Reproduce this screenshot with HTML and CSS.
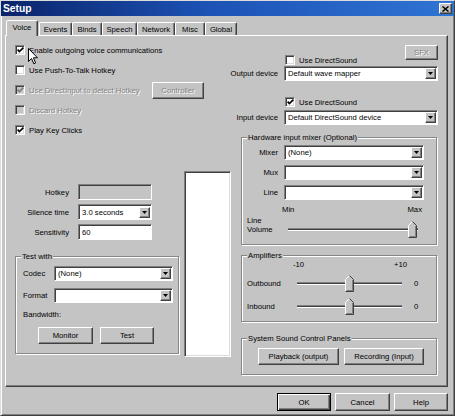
FILE: index.html
```html
<!DOCTYPE html>
<html lang="en">
  <head>
    <meta charset="utf-8">
    <title>Setup</title>
    <link rel="stylesheet" href="styles.css">
  </head>
  <body>
    <div class="window">

      <div class="titlebar">
        <span class="title">Setup</span>
        <span class="close">
          <svg width="7" height="6" viewBox="0 0 7 6"><path d="M0.5 0.5 L6.5 5.5 M6.5 0.5 L0.5 5.5" stroke="#000" stroke-width="1.5"/></svg>
        </span>
      </div>

      <div class="tabs">
        <div class="tab active w-voice">Voice</div>
        <div class="tab w-events">Events</div>
        <div class="tab w-binds">Binds</div>
        <div class="tab w-speech">Speech</div>
        <div class="tab w-network">Network</div>
        <div class="tab w-misc">Misc</div>
        <div class="tab w-global">Global</div>
      </div>

      <div class="panel">
        <div class="col-left">
          <div class="checks">
            <div class="check-row">
              <span class="cb"><svg width="7" height="6" viewBox="0 0 7 6"><polyline points="0.6,2.6 2.4,4.6 6.4,0.6" fill="none" stroke="#000" stroke-width="1.6"/></svg></span>
              <span class="cb-label">Enable outgoing voice communications</span>
            </div>
            <div class="check-row">
              <span class="cb"></span>
              <span class="cb-label">Use Push-To-Talk Hotkey</span>
            </div>
            <div class="check-row wide">
              <span class="cb off"><svg width="7" height="6" viewBox="0 0 7 6"><polyline points="0.6,2.6 2.4,4.6 6.4,0.6" fill="none" stroke="#808080" stroke-width="1.6"/></svg></span>
              <span class="cb-label dim">Use DirectInput to detect Hotkey</span>
              <span class="btn dim w-controller">Controller</span>
            </div>
            <div class="check-row">
              <span class="cb off"></span>
              <span class="cb-label dim">Discard Hotkey</span>
            </div>
            <div class="check-row">
              <span class="cb"><svg width="7" height="6" viewBox="0 0 7 6"><polyline points="0.6,2.6 2.4,4.6 6.4,0.6" fill="none" stroke="#000" stroke-width="1.6"/></svg></span>
              <span class="cb-label">Play Key Clicks</span>
            </div>
          </div>

          <div class="lower">
            <div class="fields">
              <div class="field-row">
                <label>Hotkey</label>
                <span class="edit off"></span>
              </div>
              <div class="field-row">
                <label>Silence time</label>
                <span class="combo w-field"><span class="val">3.0 seconds</span><span class="drop"><svg width="5" height="3" viewBox="0 0 5 3"><polygon points="0,0 5,0 2.5,3" fill="#000"/></svg></span></span>
              </div>
              <div class="field-row">
                <label>Sensitivity</label>
                <span class="edit"><span class="val">60</span></span>
              </div>

              <div class="group test-group">
                <span class="legend">Test with</span>
                <div class="g-row">
                  <label class="g-label">Codec</label>
                  <span class="combo w-codec"><span class="val">(None)</span><span class="drop"><svg width="5" height="3" viewBox="0 0 5 3"><polygon points="0,0 5,0 2.5,3" fill="#000"/></svg></span></span>
                </div>
                <div class="g-row">
                  <label class="g-label">Format</label>
                  <span class="combo w-codec"><span class="val"></span><span class="drop"><svg width="5" height="3" viewBox="0 0 5 3"><polygon points="0,0 5,0 2.5,3" fill="#000"/></svg></span></span>
                </div>
                <div class="bandwidth">Bandwidth:</div>
                <div class="test-buttons">
                  <span class="btn w-monitor">Monitor</span>
                  <span class="btn w-test">Test</span>
                </div>
              </div>
            </div>
            <div class="listbox"></div>
          </div>
        </div>

        <div class="col-right">
          <div class="out-top">
            <div class="check-row small">
              <span class="cb"></span>
              <span class="cb-label">Use DirectSound</span>
            </div>
            <span class="btn dim w-sfx">SFX</span>
          </div>
          <div class="dev-row">
            <label>Output device</label>
            <span class="combo w-dev"><span class="val">Default wave mapper</span><span class="drop"><svg width="5" height="3" viewBox="0 0 5 3"><polygon points="0,0 5,0 2.5,3" fill="#000"/></svg></span></span>
          </div>
          <div class="check-row small in-check">
            <span class="cb"><svg width="7" height="6" viewBox="0 0 7 6"><polyline points="0.6,2.6 2.4,4.6 6.4,0.6" fill="none" stroke="#000" stroke-width="1.6"/></svg></span>
            <span class="cb-label">Use DirectSound</span>
          </div>
          <div class="dev-row in-row">
            <label>Input device</label>
            <span class="combo w-dev"><span class="val">Default DirectSound device</span><span class="drop"><svg width="5" height="3" viewBox="0 0 5 3"><polygon points="0,0 5,0 2.5,3" fill="#000"/></svg></span></span>
          </div>

          <div class="group mixer-group">
            <span class="legend">Hardware input mixer (Optional)</span>
            <div class="mix-row">
              <label>Mixer</label>
              <span class="combo w-mix"><span class="val">(None)</span><span class="drop"><svg width="5" height="3" viewBox="0 0 5 3"><polygon points="0,0 5,0 2.5,3" fill="#000"/></svg></span></span>
            </div>
            <div class="mix-row">
              <label>Mux</label>
              <span class="combo w-mix"><span class="val"></span><span class="drop"><svg width="5" height="3" viewBox="0 0 5 3"><polygon points="0,0 5,0 2.5,3" fill="#000"/></svg></span></span>
            </div>
            <div class="mix-row">
              <label>Line</label>
              <span class="combo w-mix"><span class="val"></span><span class="drop"><svg width="5" height="3" viewBox="0 0 5 3"><polygon points="0,0 5,0 2.5,3" fill="#000"/></svg></span></span>
            </div>
            <div class="minmax"><span>Min</span><span>Max</span></div>
            <div class="volume-row">
              <span class="vol-label">Line<br>Volume</span>
              <div class="slider w-vol">
                <span class="track"></span>
                <svg class="thumb" style="left: 120px" width="9" height="17" viewBox="0 0 9 17"><path d="M0.5 16.5 V4.5 L4.5 0.5 L8.5 4.5 V16.5 Z" fill="#c4c4c4"/><path d="M0.5 16.5 V4.5 L4.5 0.5" fill="none" stroke="#fff"/><path d="M4.5 0.5 L8.5 4.5 V16.5 H0.5" fill="none" stroke="#404040"/><path d="M7.5 5 V15.5 H1.5" fill="none" stroke="#808080"/></svg>
              </div>
            </div>
          </div>

          <div class="group amp-group">
            <span class="legend">Amplifiers</span>
            <div class="ticks"><span>-10</span><span>+10</span></div>
            <div class="amp-row">
              <span class="amp-label">Outbound</span>
              <div class="slider w-amp">
                <span class="track"></span>
                <svg class="thumb" style="left: 48px" width="9" height="17" viewBox="0 0 9 17"><path d="M0.5 16.5 V4.5 L4.5 0.5 L8.5 4.5 V16.5 Z" fill="#c4c4c4"/><path d="M0.5 16.5 V4.5 L4.5 0.5" fill="none" stroke="#fff"/><path d="M4.5 0.5 L8.5 4.5 V16.5 H0.5" fill="none" stroke="#404040"/><path d="M7.5 5 V15.5 H1.5" fill="none" stroke="#808080"/></svg>
              </div>
              <span class="amp-val">0</span>
            </div>
            <div class="amp-row">
              <span class="amp-label">Inbound</span>
              <div class="slider w-amp">
                <span class="track"></span>
                <svg class="thumb" style="left: 48px" width="9" height="17" viewBox="0 0 9 17"><path d="M0.5 16.5 V4.5 L4.5 0.5 L8.5 4.5 V16.5 Z" fill="#c4c4c4"/><path d="M0.5 16.5 V4.5 L4.5 0.5" fill="none" stroke="#fff"/><path d="M4.5 0.5 L8.5 4.5 V16.5 H0.5" fill="none" stroke="#404040"/><path d="M7.5 5 V15.5 H1.5" fill="none" stroke="#808080"/></svg>
              </div>
              <span class="amp-val">0</span>
            </div>
          </div>

          <div class="group sys-group">
            <span class="legend">System Sound Control Panels</span>
            <div class="sys-buttons">
              <span class="btn w-play">Playback (output)</span>
              <span class="btn w-rec">Recording (Input)</span>
            </div>
          </div>
        </div>
      </div>

      <div class="footer">
        <span class="btn default w-ok">OK</span>
        <span class="btn w-cancel">Cancel</span>
        <span class="btn w-help">Help</span>
      </div>

      <svg class="cursor" width="11" height="17" viewBox="0 0 11 17"><path d="M0.5 0.5 V13.5 L3.5 10.5 L5.8 15.8 L7.6 15 L5.4 9.8 H9.5 Z" fill="#fff" stroke="#000"/></svg>
    </div>
  </body>
</html>
```

FILE: styles.css
```css
* { box-sizing: border-box; }

body {
  margin: 0;
  background-color: #c4c4c4;
  font-family: 'Liberation Sans', Arial, sans-serif;
  font-size: 7.7px;
  line-height: 9px;
  color: #000;
}

.window {
  position: relative;
  width: 455px;
  height: 416px;
  border: 1px solid;
  border-color: #dcdcdc #404040 #404040 #dcdcdc;
  box-shadow: inset 1px 1px #fff, inset -1px -1px #808080;
  overflow: hidden;
}

/* title bar */

.titlebar {
  height: 15px;
  display: flex;
  align-items: center;
  justify-content: space-between;
  padding: 0 2px 0 2px;
  background: linear-gradient(90deg, #0a246a, #1c52b4 45%, #2f74d4);
}

.title {
  color: #fff;
  font-weight: bold;
  font-size: 10.3px;
}

.close {
  width: 13px;
  height: 11px;
  display: flex;
  align-items: center;
  justify-content: center;
  background-color: #c4c4c4;
  border: 1px solid;
  border-color: #fff #404040 #404040 #fff;
  box-shadow: inset -1px -1px #808080;
}

/* tabs */

.tabs {
  display: flex;
  align-items: flex-end;
  height: 15px;
  margin-top: 4px;
  padding-left: 5px;
}

.tab {
  height: 13px;
  display: flex;
  align-items: center;
  justify-content: center;
  border: 1px solid;
  border-bottom: none;
  border-color: #fff #404040 transparent #fff;
  border-radius: 2px 2px 0 0;
  box-shadow: inset -1px 0 #808080;
}

.tab.active {
  position: relative;
  z-index: 1;
  height: 16px;
  margin-bottom: -1px;
  background-color: #c4c4c4;
  padding-bottom: 2px;
}

.w-voice { width: 32px; }
.w-events { width: 33px; margin-left: 1px; }
.w-binds { width: 30px; }
.w-speech { width: 35px; }
.w-network { width: 38px; }
.w-misc { width: 30px; }
.w-global { width: 32px; }

/* panel */

.panel {
  display: grid;
  grid-template-columns: 235px 197px;
  width: 443px;
  height: 352px;
  margin-left: 4px;
  border: 1px solid;
  border-color: #fff #404040 #404040 #fff;
  box-shadow: inset -1px -1px #808080;
}

.checks {
  padding-top: 4px;
}

.check-row {
  display: flex;
  align-items: center;
  height: 20px;
  padding-left: 9px;
}

.check-row.wide {
  width: 198px;
}

.check-row.small {
  height: 10px;
  padding-left: 0;
}

.cb {
  width: 10px;
  height: 10px;
  flex-shrink: 0;
  display: flex;
  align-items: center;
  justify-content: center;
  background-color: #fff;
  border: 1px solid;
  border-color: #808080 #fff #fff #808080;
  box-shadow: inset 1px 1px #404040, inset -1px -1px #dcdcdc;
}

.cb.off {
  background-color: #c4c4c4;
}

.cb-label {
  margin-left: 4px;
  white-space: nowrap;
}

.dim {
  color: #848484;
  text-shadow: 1px 1px 0 #fff;
}

.btn {
  display: flex;
  align-items: center;
  justify-content: center;
  height: 17px;
  background-color: #c4c4c4;
  border: 1px solid;
  border-color: #fff #404040 #404040 #fff;
  box-shadow: inset -1px -1px #808080;
  white-space: nowrap;
}

.btn.default {
  border-color: #000;
  box-shadow: inset 1px 1px #fff, inset -1px -1px #404040, inset -2px -2px #808080;
}

.w-controller { width: 52px; margin-left: auto; }
.w-monitor { width: 55px; }
.w-test { width: 54px; margin-left: 7px; }
.w-sfx { width: 33px; height: 15px; margin-left: auto; }
.w-play { width: 81px; }
.w-rec { width: 80px; }
.w-ok { width: 54px; height: 18px; }
.w-cancel { width: 55px; height: 18px; }
.w-help { width: 54px; height: 18px; }

/* edit boxes and combos */

.edit,
.combo {
  display: flex;
  align-items: center;
  height: 15px;
  background-color: #fff;
  border: 1px solid;
  border-color: #808080 #fff #fff #808080;
  box-shadow: inset 1px 1px #404040;
}

.edit.off {
  background-color: #c4c4c4;
}

.val {
  flex: 1;
  padding-left: 3px;
  white-space: nowrap;
}

.drop {
  width: 11px;
  height: 11px;
  margin-right: 1px;
  display: flex;
  align-items: center;
  justify-content: center;
  background-color: #c4c4c4;
  border: 1px solid;
  border-color: #fff #404040 #404040 #fff;
  box-shadow: inset -1px -1px #808080;
}

/* left lower area */

.lower {
  display: flex;
  margin-top: 31px;
}

.fields {
  width: 174px;
  padding-top: 13px;
}

.field-row {
  display: flex;
  align-items: center;
  margin-bottom: 4px;
}

.field-row label {
  width: 63px;
  text-align: right;
  margin-right: 9px;
}

.field-row .edit,
.field-row .combo {
  width: 74px;
  height: 16px;
}

.group {
  position: relative;
  border: 1px solid #868686;
  box-shadow: 1px 1px 0 #fff, inset 1px 1px 0 #fff;
}

.legend {
  position: absolute;
  top: -5px;
  left: 5px;
  padding: 0 1px;
  background-color: #c4c4c4;
  white-space: nowrap;
}

.test-group {
  width: 164px;
  height: 98px;
  margin: 16px 0 0 9px;
  padding: 9px 0 0 7px;
}

.g-row {
  display: flex;
  align-items: center;
  margin-bottom: 7px;
}

.g-label {
  width: 31px;
}

.w-codec {
  width: 119px;
}

.bandwidth {
  margin-top: 3px;
}

.test-buttons {
  display: flex;
  margin: 8px 0 0 15px;
}

.listbox {
  width: 47px;
  height: 186px;
  margin-left: 4px;
  background-color: #fff;
  border: 1px solid;
  border-color: #808080 #fff #fff #808080;
  box-shadow: inset 1px 1px #404040, inset -1px -1px #dcdcdc;
}

/* right column */

.out-top {
  display: flex;
  align-items: flex-start;
  height: 20px;
  margin-top: 9px;
}

.out-top .check-row {
  margin: 10px 0 0 44px;
}

.dev-row {
  display: flex;
  align-items: center;
  margin-top: 1px;
}

.dev-row label {
  width: 37px;
  margin-right: 6px;
  text-align: right;
  white-space: nowrap;
  direction: rtl;
}

.w-dev {
  width: 154px;
}

.in-check {
  margin: 16px 0 0 44px;
}

.in-row {
  margin-top: 3px;
}

.mixer-group {
  width: 196px;
  height: 108px;
  margin-top: 12px;
  padding-top: 7px;
}

.mix-row {
  display: flex;
  align-items: center;
  margin-bottom: 5px;
}

.mix-row label {
  width: 36px;
  margin-right: 6px;
  text-align: right;
}

.w-mix {
  width: 140px;
}

.minmax {
  display: flex;
  justify-content: space-between;
  width: 180px;
  margin-top: 0;
  padding-left: 40px;
}

.volume-row {
  display: flex;
  align-items: flex-start;
  margin-top: 2px;
  padding-left: 5px;
}

.vol-label {
  width: 41px;
}

.slider {
  position: relative;
  height: 17px;
}

.w-vol {
  width: 130px;
  margin-top: 5px;
}

.w-amp {
  width: 105px;
}

.track {
  position: absolute;
  left: 0;
  right: 0;
  top: 7px;
  height: 3px;
  background-color: #404040;
  border-top: 1px solid #808080;
  border-bottom: 1px solid #fff;
}

.thumb {
  position: absolute;
  top: 0;
}

.amp-group {
  width: 196px;
  height: 67px;
  margin-top: 10px;
  padding-top: 4px;
}

.ticks {
  display: flex;
  justify-content: space-between;
  width: 165px;
  padding-left: 51px;
}

.amp-row {
  display: flex;
  align-items: center;
  margin-top: 6px;
}

.amp-label {
  width: 55px;
  padding-left: 5px;
}

.amp-val {
  padding-left: 12px;
}

.sys-group {
  width: 196px;
  height: 37px;
  margin-top: 16px;
  padding: 9px 0 0 16px;
}

.sys-buttons {
  display: flex;
  gap: 5px;
}

/* bottom buttons */

.footer {
  display: flex;
  justify-content: flex-end;
  gap: 4px;
  margin-top: 6px;
  padding-right: 6px;
}

.cursor {
  position: absolute;
  left: 27px;
  top: 47px;
}
```
